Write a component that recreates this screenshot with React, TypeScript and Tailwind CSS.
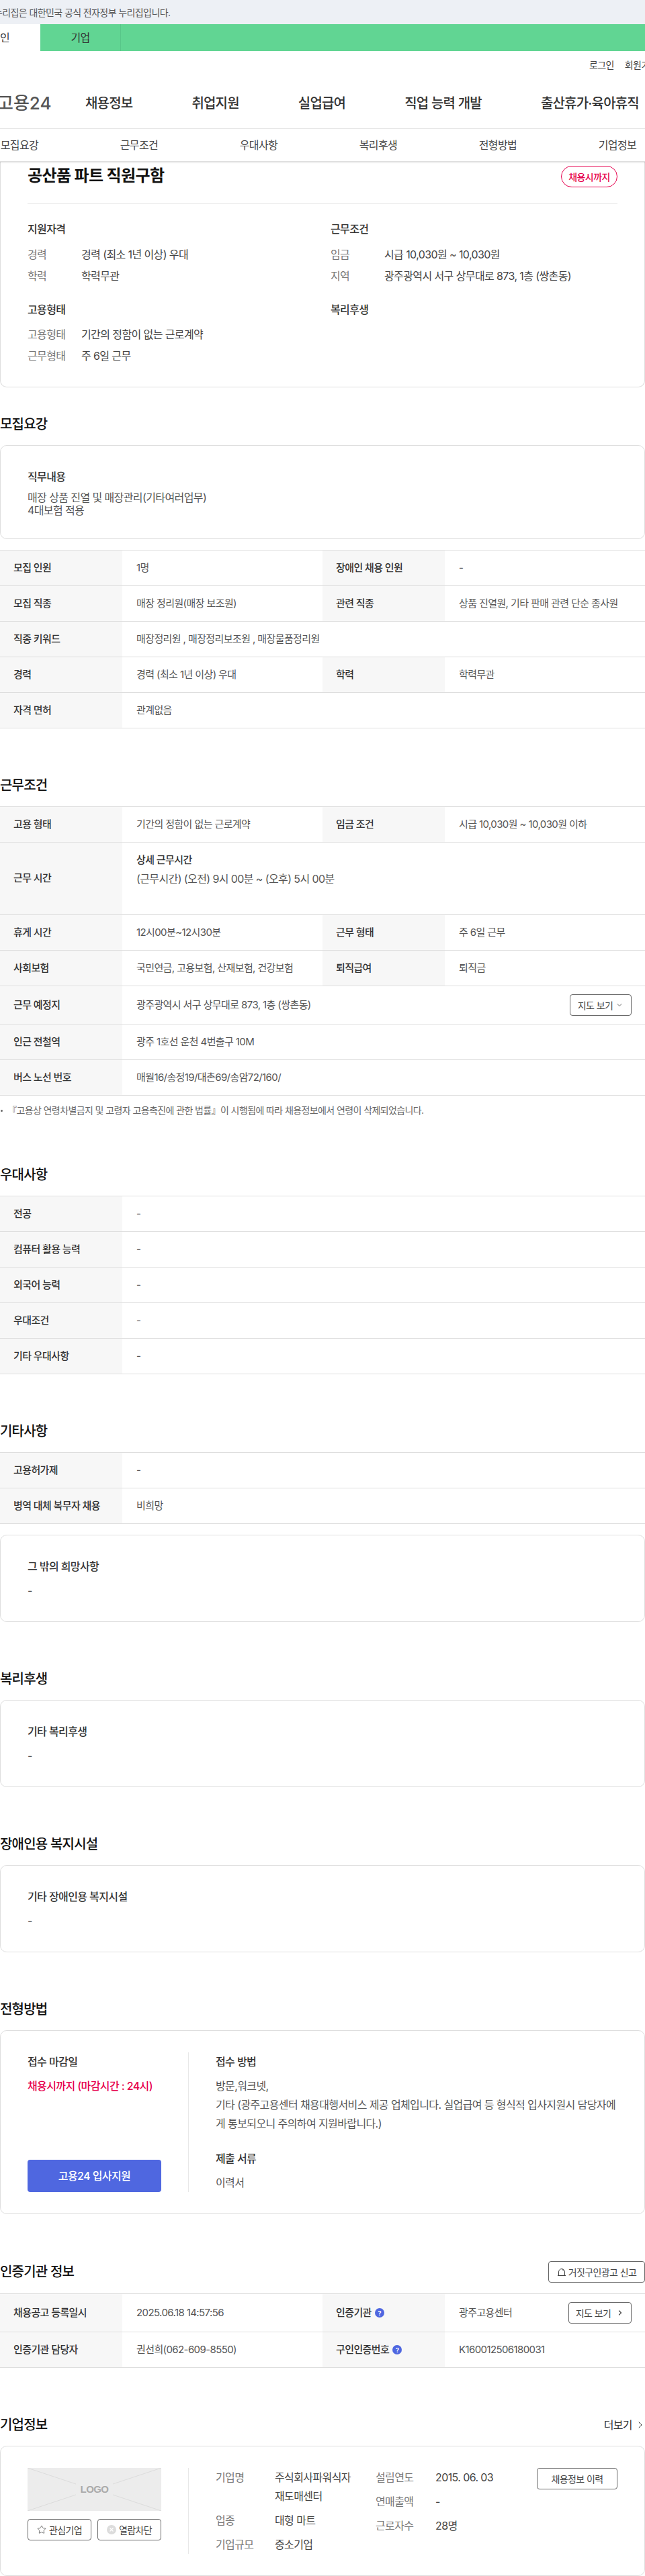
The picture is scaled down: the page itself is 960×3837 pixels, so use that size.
import React from 'react';
import { ChevronDown, ChevronRight, Star } from 'lucide-react';

interface RowProps {
  label: React.ReactNode;
  value: React.ReactNode;
  label2?: React.ReactNode;
  value2?: React.ReactNode;
  height?: string;
}

const Row: React.FC<RowProps> = ({ label, value, label2, value2, height = 'h-[53px]' }) => (
  <div className={`flex border-b border-[#dedede] text-[15px] ${height}`}>
    <div className="flex w-[182px] shrink-0 items-center bg-[#f7f7f7] pl-5 font-medium text-[#333]">{label}</div>
    {label2 ? (
      <>
        <div className="flex w-[298px] shrink-0 items-center pl-[21px] text-[#555]">{value}</div>
        <div className="flex w-[182px] shrink-0 items-center bg-[#f7f7f7] pl-5 font-medium text-[#333]">{label2}</div>
        <div className="flex flex-1 items-center pl-[21px] pr-5 text-[#555]">{value2}</div>
      </>
    ) : (
      <div className="flex flex-1 items-center pl-[21px] pr-5 text-[#555]">{value}</div>
    )}
  </div>
);

const Table: React.FC<{ children: React.ReactNode }> = ({ children }) => (
  <div className="mt-4 border-t border-[#dedede]">{children}</div>
);

const Heading: React.FC<{ children: React.ReactNode; className?: string }> = ({ children, className = 'mt-[70px]' }) => (
  <h2 className={`text-[20px] font-medium leading-[30px] tracking-[-0.8px] text-[#111] ${className}`}>{children}</h2>
);

const Card: React.FC<{ children: React.ReactNode; className?: string }> = ({ children, className = '' }) => (
  <div className={`mt-4 rounded-[10px] border border-[#dedede] px-10 py-8 ${className}`}>{children}</div>
);

const SimpleCard: React.FC<{ title: string; value: string }> = ({ title, value }) => (
  <Card>
    <div className="text-[16px] font-medium leading-7 text-[#333]">{title}</div>
    <div className="mt-2 text-[16px] leading-7 text-[#555]">{value}</div>
  </Card>
);

const InfoLine: React.FC<{ label: string; value: string }> = ({ label, value }) => (
  <div className="flex h-8 items-center text-[16px]">
    <span className="w-20 shrink-0 text-[#777]">{label}</span>
    <span className="text-[#444]">{value}</span>
  </div>
);

const Help: React.FC = () => (
  <span className="ml-[5px] flex h-[14px] w-[14px] items-center justify-center rounded-full bg-[#4f67e0] text-[9px] font-bold leading-none text-white">?</span>
);

const OutlineButton: React.FC<{ children: React.ReactNode; className?: string }> = ({ children, className = '' }) => (
  <button type="button" className={`flex items-center justify-center rounded-[4px] border border-[#666] bg-white text-[#444] ${className}`}>
    {children}
  </button>
);

const CompanyLine: React.FC<{ label: string; value: React.ReactNode; labelWidth: string }> = ({ label, value, labelWidth }) => (
  <div className="flex text-[16px] leading-7">
    <span className={`shrink-0 text-[#777] ${labelWidth}`}>{label}</span>
    <span className="text-[#444]">{value}</span>
  </div>
);

const App: React.FC = () => {
  return (
    <div className="w-[960px] overflow-hidden bg-white font-['Inter','Noto_Sans_CJK_KR',sans-serif] tracking-[-0.6px] whitespace-nowrap">
      {/* Government banner */}
      <div className="flex h-9 items-center bg-[#edf0f5] text-[14px] text-[#555]">
        <span className="-ml-[9px]">누리집은 대한민국 공식 전자정부 누리집입니다.</span>
      </div>

      {/* Tabs */}
      <div className="-ml-[60px] flex h-10 bg-[#61d593] text-[16px] text-[#333]">
        <div className="flex w-[120px] items-center justify-center bg-white">개인</div>
        <div className="flex w-[120px] items-center justify-center border-r border-[#58c588]">기업</div>
      </div>

      {/* Login */}
      <div className="flex h-10 items-center gap-4 pl-[877px] text-[14px] text-[#444]">
        <span>로그인</span>
        <span>회원가입</span>
      </div>

      {/* Main nav */}
      <div className="flex h-[76px] items-center border-b border-[#e8e8e8] text-[20px] font-medium tracking-[-0.8px] text-[#333]">
        <div className="-ml-[4px] w-[131px] shrink-0 text-[26px] leading-none tracking-normal text-[#555]">고용24</div>
        <div className="flex gap-[88px]">
          <span>채용정보</span>
          <span>취업지원</span>
          <span>실업급여</span>
          <span>직업 능력 개발</span>
          <span>출산휴가·육아휴직</span>
        </div>
      </div>

      {/* Sub nav */}
      <div className="relative z-10 -ml-[60px] flex h-[49px] w-[1068px] items-center border-b border-[#dedede] bg-white text-[16px] text-[#444] shadow-[0_1px_2px_rgba(0,0,0,0.12)]">
        {['모집요강', '근무조건', '우대사항', '복리후생', '전형방법', '기업정보'].map(item => (
          <span key={item} className="flex-1 text-center">{item}</span>
        ))}
      </div>

      {/* Job summary */}
      <div className="rounded-b-[10px] border border-t-0 border-[#dedede] px-10 pb-[30px]">
        <div className="flex items-start justify-between border-b border-[#e8e8e8] pb-6 pt-[6px]">
          <h1 className="text-[24px] font-bold leading-[30px] text-[#111]">공산품 파트 직원구함</h1>
          <span className="flex h-8 w-[84px] items-center justify-center rounded-full border border-[#e6004d] text-[14px] font-medium text-[#e6004d]">채용시까지</span>
        </div>
        <div className="mt-[23px] grid grid-cols-[451px_1fr]">
          <div>
            <div className="text-[16px] font-medium leading-7 text-[#333]">지원자격</div>
            <div className="mt-2">
              <InfoLine label="경력" value="경력 (최소 1년 이상) 우대" />
              <InfoLine label="학력" value="학력무관" />
            </div>
          </div>
          <div>
            <div className="text-[16px] font-medium leading-7 text-[#333]">근무조건</div>
            <div className="mt-2">
              <InfoLine label="임금" value="시급 10,030원 ~ 10,030원" />
              <InfoLine label="지역" value="광주광역시 서구 상무대로 873, 1층 (쌍촌동)" />
            </div>
          </div>
          <div className="mt-5">
            <div className="text-[16px] font-medium leading-7 text-[#333]">고용형태</div>
            <div className="mt-[7px]">
              <InfoLine label="고용형태" value="기간의 정함이 없는 근로계약" />
              <InfoLine label="근무형태" value="주 6일 근무" />
            </div>
          </div>
          <div className="mt-5">
            <div className="text-[16px] font-medium leading-7 text-[#333]">복리후생</div>
          </div>
        </div>
      </div>

      {/* 모집요강 */}
      <Heading className="mt-10">모집요강</Heading>
      <Card>
        <div className="text-[16px] font-medium leading-7 text-[#333]">직무내용</div>
        <div className="mt-2 text-[16px] leading-[19px] text-[#555]">
          <div>매장 상품 진열 및 매장관리(기타여러업무)</div>
          <div>4대보험 적용</div>
        </div>
      </Card>
      <Table>
        <Row label="모집 인원" value="1명" label2="장애인 채용 인원" value2="-" />
        <Row label="모집 직종" value="매장 정리원(매장 보조원)" label2="관련 직종" value2="상품 진열원, 기타 판매 관련 단순 종사원" />
        <Row label="직종 키워드" value="매장정리원 , 매장정리보조원 , 매장물품정리원" />
        <Row label="경력" value="경력 (최소 1년 이상) 우대" label2="학력" value2="학력무관" />
        <Row label="자격 면허" value="관계없음" />
      </Table>

      {/* 근무조건 */}
      <Heading>근무조건</Heading>
      <Table>
        <Row label="고용 형태" value="기간의 정함이 없는 근로계약" label2="임금 조건" value2="시급 10,030원 ~ 10,030원 이하" />
        <div className="flex h-[108px] border-b border-[#dedede] text-[15px]">
          <div className="flex w-[182px] shrink-0 items-center bg-[#f7f7f7] pl-5 font-medium text-[#333]">근무 시간</div>
          <div className="pl-[21px] pt-[12px] leading-7 text-[#555]">
            <div className="font-medium text-[#333]">상세 근무시간</div>
            <div className="text-[16px]">(근무시간) (오전) 9시 00분 ~ (오후) 5시 00분</div>
          </div>
        </div>
        <Row label="휴게 시간" value="12시00분~12시30분" label2="근무 형태" value2="주 6일 근무" />
        <Row label="사회보험" value="국민연금, 고용보험, 산재보험, 건강보험" label2="퇴직급여" value2="퇴직금" />
        <Row
          height="h-[57px]"
          label="근무 예정지"
          value={
            <div className="flex w-full items-center justify-between">
              <span>광주광역시 서구 상무대로 873, 1층 (쌍촌동)</span>
              <OutlineButton className="h-8 w-[92px] text-[14px]">
                지도 보기
                <ChevronDown className="ml-1 h-3 w-3" strokeWidth={1.5} />
              </OutlineButton>
            </div>
          }
        />
        <Row label="인근 전철역" value="광주 1호선 운천 4번출구 10M" />
        <Row label="버스 노선 번호" value="매월16/송정19/대촌69/송암72/160/" />
      </Table>
      <div className="mt-[11px] flex items-center text-[14px] leading-[22px] text-[#666]">
        <span className="ml-[1px] h-[3px] w-[3px] rounded-full bg-[#666]" />
        <span className="ml-[7px]">『고용상 연령차별금지 및 고령자 고용촉진에 관한 법률』이 시행됨에 따라 채용정보에서 연령이 삭제되었습니다.</span>
      </div>

      {/* 우대사항 */}
      <Heading>우대사항</Heading>
      <Table>
        <Row label="전공" value="-" />
        <Row label="컴퓨터 활용 능력" value="-" />
        <Row label="외국어 능력" value="-" />
        <Row label="우대조건" value="-" />
        <Row label="기타 우대사항" value="-" />
      </Table>

      {/* 기타사항 */}
      <Heading>기타사항</Heading>
      <Table>
        <Row label="고용허가제" value="-" />
        <Row label="병역 대체 복무자 채용" value="비희망" />
      </Table>
      <SimpleCard title="그 밖의 희망사항" value="-" />

      {/* 복리후생 */}
      <Heading>복리후생</Heading>
      <SimpleCard title="기타 복리후생" value="-" />

      {/* 장애인용 복지시설 */}
      <Heading>장애인용 복지시설</Heading>
      <SimpleCard title="기타 장애인용 복지시설" value="-" />

      {/* 전형방법 */}
      <Heading>전형방법</Heading>
      <Card className="flex">
        <div className="flex w-[199px] shrink-0 flex-col justify-between">
          <div>
            <div className="text-[16px] font-medium leading-7 text-[#333]">접수 마감일</div>
            <div className="mt-2 text-[16px] font-medium leading-7 text-[#e6004d]">채용시까지 (마감시간 : 24시)</div>
          </div>
          <button type="button" className="h-12 rounded-[4px] bg-[#4f67e0] text-[16px] font-medium text-white">고용24 입사지원</button>
        </div>
        <div className="ml-10 flex-1 border-l border-[#e8e8e8] pl-10">
          <div className="text-[16px] font-medium leading-7 text-[#333]">접수 방법</div>
          <div className="mt-2 whitespace-normal break-all text-[16px] leading-7 text-[#555]">
            <div>방문,워크넷,</div>
            <div>기타 (광주고용센터 채용대행서비스 제공 업체입니다. 실업급여 등 형식적 입사지원시 담당자에게 통보되오니 주의하여 지원바랍니다.)</div>
          </div>
          <div className="mt-6 text-[16px] font-medium leading-7 text-[#333]">제출 서류</div>
          <div className="mt-2 text-[16px] leading-7 text-[#555]">이력서</div>
        </div>
      </Card>

      {/* 인증기관 정보 */}
      <div className="mt-[70px] flex items-center justify-between">
        <Heading className="">인증기관 정보</Heading>
        <OutlineButton className="h-8 w-[144px] text-[14px]">
          <svg className="mr-[3px] h-[14px] w-[14px]" viewBox="0 0 14 14" fill="none" stroke="#444" strokeWidth="1">
            <path d="M1 12.5h12M2.5 12.5V7a4.5 4.5 0 0 1 9 0v5.5M7 2.5a4.5 4.5 0 0 1 2.5 3" />
          </svg>
          거짓구인광고 신고
        </OutlineButton>
      </div>
      <Table>
        <Row
          height="h-[57px]"
          label="채용공고 등록일시"
          value="2025.06.18 14:57:56"
          label2={<>인증기관<Help /></>}
          value2={
            <div className="flex w-full items-center justify-between">
              <span>광주고용센터</span>
              <OutlineButton className="h-8 w-[94px] text-[14px]">
                지도 보기
                <ChevronRight className="ml-2 h-3 w-3" strokeWidth={2.5} />
              </OutlineButton>
            </div>
          }
        />
        <Row label="인증기관 담당자" value="권선희(062-609-8550)" label2={<>구인인증번호<Help /></>} value2="K160012506180031" />
      </Table>

      {/* 기업정보 */}
      <div className="mt-[70px] flex items-center justify-between">
        <Heading className="">기업정보</Heading>
        <span className="-mr-[1px] flex items-center text-[16px] text-[#333]">
          더보기
          <ChevronRight className="ml-1 h-4 w-4" strokeWidth={1.5} />
        </span>
      </div>
      <Card className="flex">
        <div className="w-[199px] shrink-0">
          <div className="relative h-16 bg-[#ececec]">
            <svg className="absolute inset-0 h-full w-full" viewBox="0 0 199 64" fill="none" stroke="#dcdcdc" strokeWidth="1">
              <path d="M0 0L72 24M199 0L127 24M0 64L72 40M199 64L127 40" />
            </svg>
            <span className="absolute inset-0 flex items-center justify-center font-['Liberation_Sans',sans-serif] text-[15px] font-bold text-[#aaa]">LOGO</span>
          </div>
          <div className="mt-3 flex justify-between">
            <OutlineButton className="h-8 w-[95px] text-[14px]">
              <Star className="mr-1 h-[14px] w-[14px]" strokeWidth={1.25} />
              관심기업
            </OutlineButton>
            <OutlineButton className="h-8 w-[95px] text-[14px]">
              <svg className="mr-1 h-[14px] w-[14px]" viewBox="0 0 14 14" fill="none">
                <circle cx="7" cy="7" r="7" fill="#dcdcdc" />
                <path d="M4.5 4.5l5 5M9.5 4.5l-5 5" stroke="#fff" strokeWidth="1.2" />
              </svg>
              열람차단
            </OutlineButton>
          </div>
        </div>
        <div className="ml-10 flex flex-1 border-l border-[#e8e8e8] pl-10">
          <div className="flex w-[238px] shrink-0 flex-col gap-2">
            <CompanyLine labelWidth="w-[88px]" label="기업명" value={<>주식회사파워식자<br />재도매센터</>} />
            <CompanyLine labelWidth="w-[88px]" label="업종" value="대형 마트" />
            <CompanyLine labelWidth="w-[88px]" label="기업규모" value="중소기업" />
          </div>
          <div className="flex flex-1 flex-col gap-2">
            <CompanyLine labelWidth="w-[89px]" label="설립연도" value="2015. 06. 03" />
            <CompanyLine labelWidth="w-[89px]" label="연매출액" value="-" />
            <CompanyLine labelWidth="w-[89px]" label="근로자수" value="28명" />
          </div>
          <OutlineButton className="h-8 w-[120px] text-[14px]">채용정보 이력</OutlineButton>
        </div>
      </Card>
    </div>
  );
};

export default App;
